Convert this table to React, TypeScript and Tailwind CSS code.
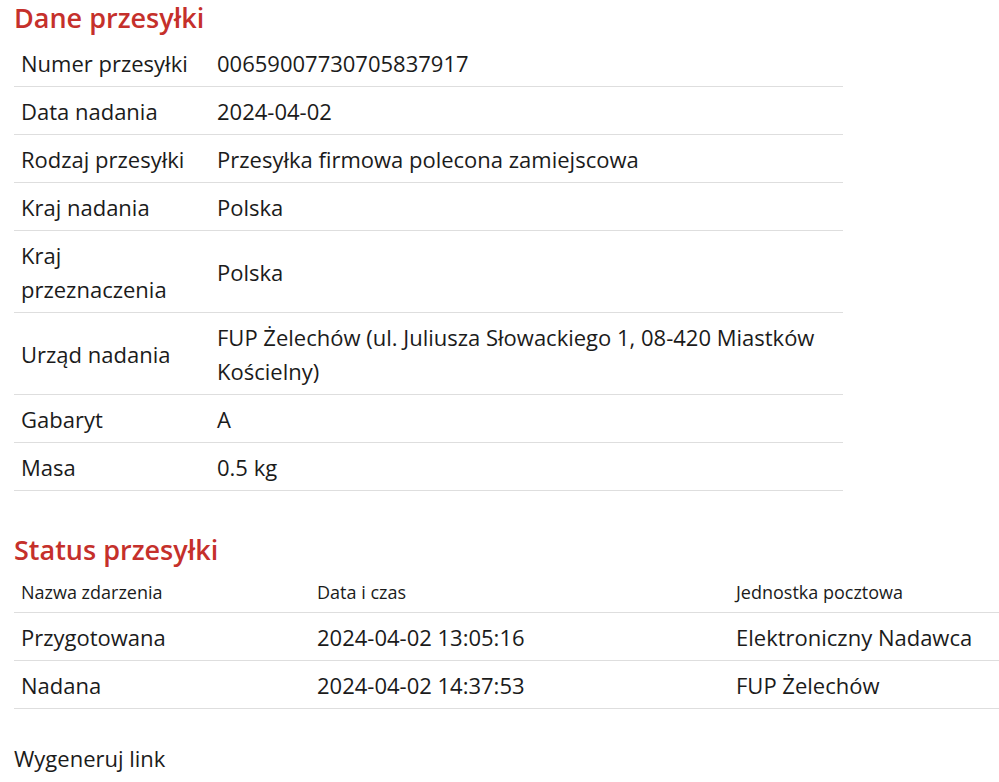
import React from "react";

const DETAILS: { label: string; value: string }[] = [
  { label: "Numer przesyłki", value: "00659007730705837917" },
  { label: "Data nadania", value: "2024-04-02" },
  { label: "Rodzaj przesyłki", value: "Przesyłka firmowa polecona zamiejscowa" },
  { label: "Kraj nadania", value: "Polska" },
  { label: "Kraj przeznaczenia", value: "Polska" },
  {
    label: "Urząd nadania",
    value: "FUP Żelechów (ul. Juliusza Słowackiego 1, 08-420 Miastków Kościelny)",
  },
  { label: "Gabaryt", value: "A" },
  { label: "Masa", value: "0.5 kg" },
];

const EVENTS = [
  { name: "Przygotowana", time: "2024-04-02 13:05:16", unit: "Elektroniczny Nadawca" },
  { name: "Nadana", time: "2024-04-02 14:37:53", unit: "FUP Żelechów" },
];

export default function App() {
  return (
    <div className="min-h-[782px] bg-white pl-[14px] font-['Open_Sans',sans-serif] text-[#1b1b1b]">
      <h2 className="pb-[4px] text-[27px] font-semibold leading-[35px] text-[#c5302b]">
        Dane przesyłki
      </h2>
      <table className="w-[829px] border-collapse text-[22px] leading-[34px]">
        <tbody>
          {DETAILS.map((row) => (
            <tr key={row.label} className="border-b border-[#dedede]">
              <td className="w-[196px] px-[7px] pt-[7px] pb-[6px] align-middle">{row.label}</td>
              <td className="px-[7px] pt-[7px] pb-[6px] align-middle">{row.value}</td>
            </tr>
          ))}
        </tbody>
      </table>

      <h2 className="mt-[41px] pb-[4px] text-[27px] font-semibold leading-[35px] text-[#c5302b]">
        Status przesyłki
      </h2>
      <table className="w-[985px] border-collapse text-[22px] leading-[34px]">
        <thead>
          <tr className="border-b border-[#dedede] text-left text-[18px] leading-[28px]">
            <th className="w-[296px] px-[7px] pt-[7px] pb-[6px] font-normal">Nazwa zdarzenia</th>
            <th className="w-[419px] px-[7px] pt-[7px] pb-[6px] font-normal">Data i czas</th>
            <th className="px-[7px] pt-[7px] pb-[6px] font-normal">Jednostka pocztowa</th>
          </tr>
        </thead>
        <tbody>
          {EVENTS.map((e) => (
            <tr key={e.name} className="border-b border-[#dedede]">
              <td className="px-[7px] pt-[7px] pb-[6px]">{e.name}</td>
              <td className="px-[7px] pt-[7px] pb-[6px]">{e.time}</td>
              <td className="px-[7px] pt-[7px] pb-[6px]">{e.unit}</td>
            </tr>
          ))}
        </tbody>
      </table>

      <p className="mt-[32px] text-[22px] leading-[34px]">Wygeneruj link</p>
    </div>
  );
}
